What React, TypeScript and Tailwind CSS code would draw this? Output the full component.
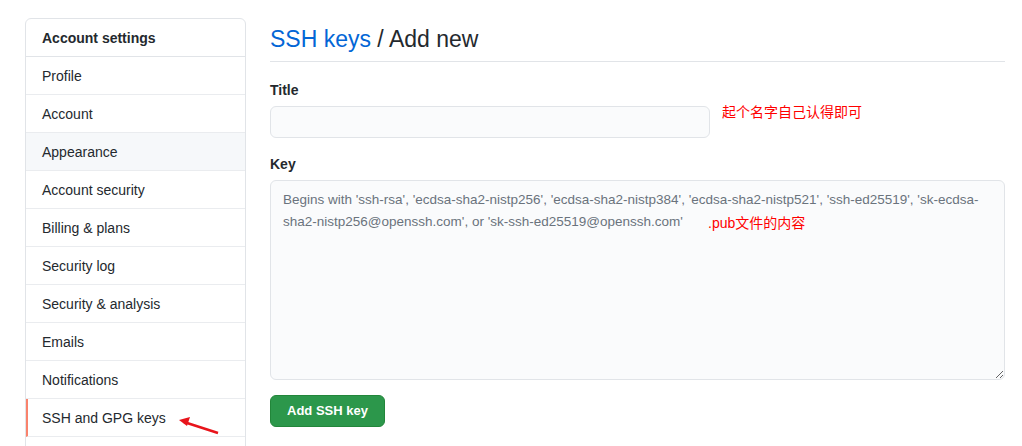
const menu = [
  'Profile',
  'Account',
  'Appearance',
  'Account security',
  'Billing & plans',
  'Security log',
  'Security & analysis',
  'Emails',
  'Notifications',
  'SSH and GPG keys',
];

export default function App() {
  return (
    <div
      className="relative h-[446px] overflow-hidden bg-white text-[#24292e]"
      style={{ fontFamily: '"Segoe UI", "Liberation Sans", "Noto Sans CJK SC", sans-serif' }}
    >
      <div className="flex gap-[24px] pl-[25px] pr-[17px] pt-[18px]">
        <nav className="w-[221px] shrink-0 rounded-t-[6px] border border-[#e1e4e8] text-[14px]">
          <div className="flex h-[38px] items-center border-b border-[#e1e4e8] px-[16px] pt-[2px] font-bold">
            Account settings
          </div>
          {menu.map((item) => (
            <div
              key={item}
              className={`flex h-[38px] items-center border-b border-[#eaecef] px-[16px] pt-[2px] ${
                item === 'Appearance' ? 'bg-[#f6f8fa]' : ''
              } ${item === 'SSH and GPG keys' ? 'border-l-2 border-l-[#f9826c] pl-[14px]' : ''}`}
            >
              {item}
            </div>
          ))}
          <div className="h-[38px]" />
        </nav>

        <main className="flex-1 pt-[1px]">
          <div className="flex h-[43px] items-start border-b border-[#e1e4e8] text-[23px] leading-[40px]">
            <span className="text-[#0366d6]">SSH keys</span>
            <span className="whitespace-pre"> / Add new</span>
          </div>

          <div className="mt-[18px]">
            <div className="text-[14px] font-bold leading-[20px]">Title</div>
            <div className="mt-[6px] flex items-start">
              <input className="h-[32px] w-[440px] rounded-[6px] border border-[#e1e4e8] bg-[#fafbfc]" />
              <span className="ml-[12px] -mt-[4px] text-[14px] text-[#ff0000]">起个名字自己认得即可</span>
            </div>
          </div>

          <div className="mt-[16px]">
            <div className="text-[14px] font-bold leading-[20px]">Key</div>
            <div className="relative mt-[6px]">
              <textarea
                className="block h-[200px] w-full resize-y rounded-[6px] border border-[#e1e4e8] bg-[#fafbfc] px-[12px] py-[8px] text-[13.5px] leading-[22px] placeholder:text-[#6a737d]"
                placeholder="Begins with 'ssh-rsa', 'ecdsa-sha2-nistp256', 'ecdsa-sha2-nistp384', 'ecdsa-sha2-nistp521', 'ssh-ed25519', 'sk-ecdsa-sha2-nistp256@openssh.com', or 'sk-ssh-ed25519@openssh.com'"
              />
              <span className="absolute left-[438px] top-[33px] text-[14px] text-[#ff0000]">.pub文件的内容</span>
            </div>
          </div>

          <button className="mt-[15px] h-[32px] rounded-[6px] border border-[#22863a] bg-[#2c974b] px-[16px] text-[13px] font-bold text-white">
            Add SSH key
          </button>
        </main>
      </div>

      <svg className="absolute left-[176px] top-[414px]" width="46" height="24" viewBox="0 0 46 24">
        <line x1="42" y1="19" x2="8" y2="8" stroke="#e8141b" strokeWidth="2.5" />
        <polygon points="3,6 14,3 11,12" fill="#e8141b" />
      </svg>
    </div>
  );
}
